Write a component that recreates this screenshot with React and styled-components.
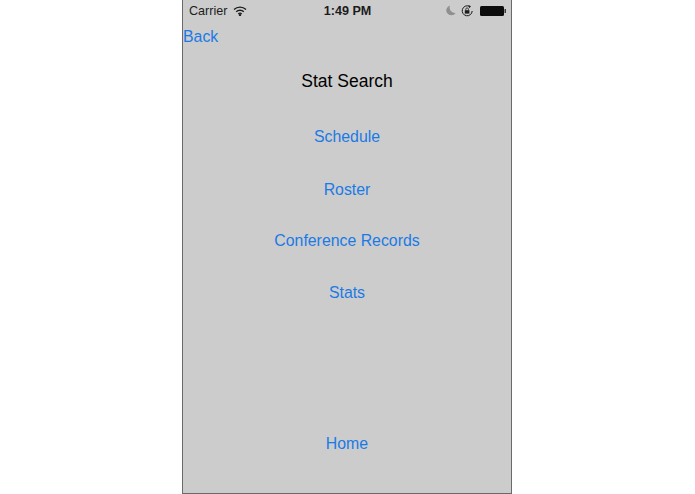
import React from "react";
import styled, { createGlobalStyle } from "styled-components";

const GlobalStyle = createGlobalStyle`
  html, body {
    margin: 0;
    padding: 0;
    background: #fff;
  }
  body {
    font-family: "Liberation Sans", Arial, sans-serif;
  }
`;

const Page = styled.div`
  width: 695px;
  height: 494px;
  display: flex;
  justify-content: center;
  overflow: hidden;
`;

const Phone = styled.div`
  width: 330px;
  height: 494px;
  margin-right: 1px;
  box-sizing: border-box;
  background: #cccccc;
  border: 1px solid #6a6a6a;
  border-top: 0;
  display: flex;
  flex-direction: column;
`;

const StatusBar = styled.div`
  height: 20px;
  flex: none;
  box-sizing: border-box;
  display: grid;
  grid-template-columns: 1fr auto 1fr;
  align-items: center;
  padding: 1px 5px 0 6px;
  font-size: 12.6px;
  color: #1c1c1c;
`;

const StatusLeft = styled.div`
  display: flex;
  align-items: center;
  gap: 6px;
`;

const StatusRight = styled.div`
  display: flex;
  align-items: center;
  justify-content: flex-end;
`;

const StatusIcon = styled.span`
  display: flex;
  margin-right: ${p => p.$gap}px;
`;

const Clock = styled.div`
  font-weight: 700;
`;

const BackRow = styled.div`
  height: 33px;
  flex: none;
  display: flex;
  align-items: center;
`;

const LinkText = styled.a`
  color: #1a7ae6;
  font-size: 15.85px;
  cursor: pointer;
`;

const Title = styled.div`
  height: 57px;
  flex: none;
  display: flex;
  align-items: center;
  justify-content: center;
  font-size: 17.5px;
  color: #000;
`;

const Menu = styled.nav`
  flex: 1;
  display: flex;
  flex-direction: column;
  align-items: center;
`;

const MenuItem = styled.div`
  height: ${p => p.$height}px;
  flex: none;
  display: flex;
  align-items: center;
  justify-content: center;
`;

const Spacer = styled.div`
  flex: 1;
`;

const WifiIcon = () => (
  <svg width="14" height="10" viewBox="0 0 14 10" fill="none" stroke="#1c1c1c" strokeWidth="1.4">
    <path d="M1 3.6a8.6 8.6 0 0 1 12 0" />
    <path d="M3.2 5.8a5.5 5.5 0 0 1 7.6 0" />
    <path d="M5.3 7.9a2.5 2.5 0 0 1 3.4 0" />
    <circle cx="7" cy="9.1" r="0.5" fill="#1c1c1c" />
  </svg>
);

const MoonIcon = () => (
  <svg width="10" height="11" viewBox="0 0 10 11">
    <path d="M4 0.5a5 5 0 1 0 5.6 7.4A5.4 5.4 0 0 1 4 0.5z" fill="#8f8f8f" />
  </svg>
);

const RotationLockIcon = () => (
  <svg width="12" height="12" viewBox="0 0 12 12" fill="none">
    <path d="M8.4 1.3A5 5 0 1 0 11.2 6" stroke="#1c1c1c" strokeWidth="1" />
    <path d="M7.4 0l2.6 1.2-1.8 2z" fill="#1c1c1c" />
    <rect x="3.8" y="5.2" width="4.6" height="3.4" fill="#1c1c1c" />
    <path d="M4.8 5.2V4.2a1.3 1.3 0 0 1 2.6 0v1" stroke="#1c1c1c" strokeWidth="0.8" />
  </svg>
);

const BatteryIcon = () => (
  <svg width="26" height="10" viewBox="0 0 26 10">
    <rect x="0" y="0" width="24" height="10" rx="1.5" fill="#0c0c0c" />
    <rect x="24.5" y="3" width="1.5" height="4" fill="#3a3a3a" />
  </svg>
);

const links = [
  { label: "Schedule", height: 53 },
  { label: "Roster", height: 53 },
  { label: "Conference Records", height: 49 },
  { label: "Stats", height: 55 }
];

const App = () => (
  <>
    <GlobalStyle />
    <Page>
      <Phone>
        <StatusBar>
          <StatusLeft>
            <span>Carrier</span>
            <WifiIcon />
          </StatusLeft>
          <Clock>1:49 PM</Clock>
          <StatusRight>
            <StatusIcon $gap={5}>
              <MoonIcon />
            </StatusIcon>
            <StatusIcon $gap={7}>
              <RotationLockIcon />
            </StatusIcon>
            <BatteryIcon />
          </StatusRight>
        </StatusBar>
        <BackRow>
          <LinkText>Back</LinkText>
        </BackRow>
        <Title>Stat Search</Title>
        <Menu>
          {links.map(link => (
            <MenuItem key={link.label} $height={link.height}>
              <LinkText>{link.label}</LinkText>
            </MenuItem>
          ))}
          <Spacer />
          <MenuItem $height={50}>
            <LinkText>Home</LinkText>
          </MenuItem>
          <MenuItem $height={24} />
        </Menu>
      </Phone>
    </Page>
  </>
);

export default App;
